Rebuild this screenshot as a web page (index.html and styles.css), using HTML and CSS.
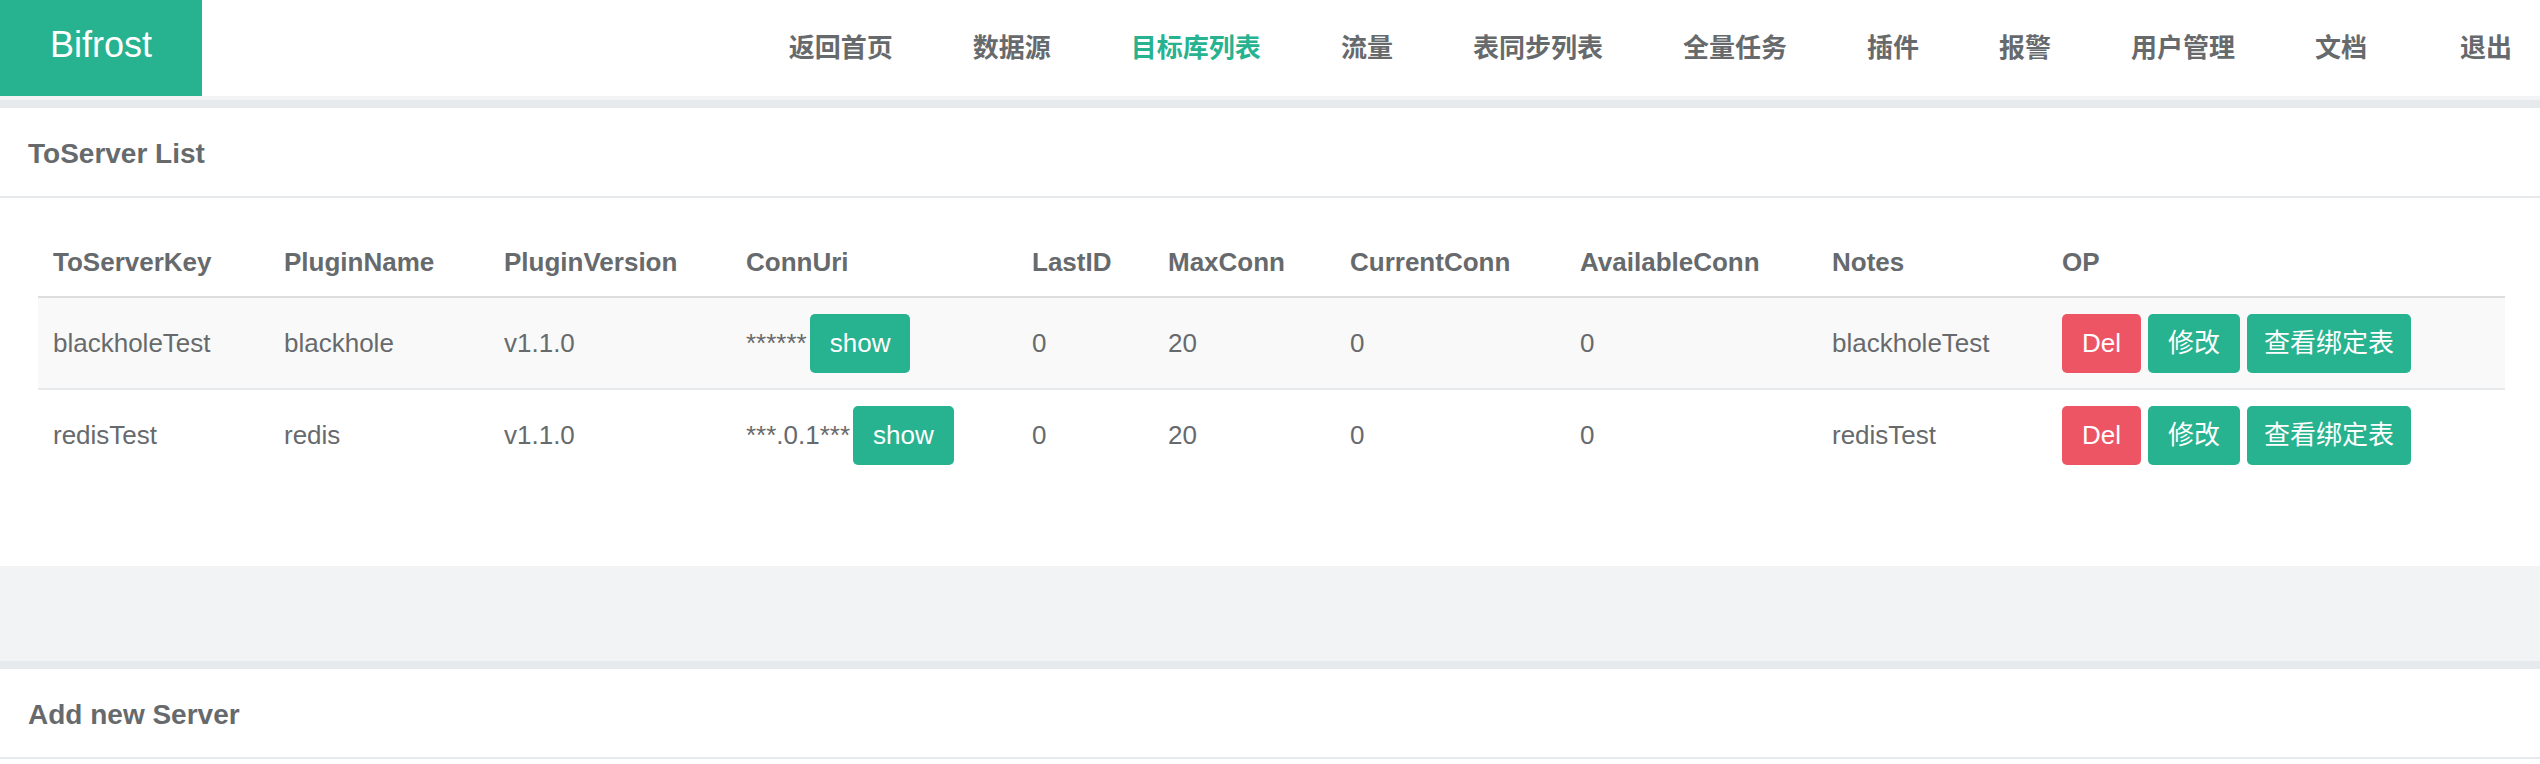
FILE: index.html
```html
<!DOCTYPE html>
<html lang="zh">
<head>
<meta charset="utf-8">
<title>Bifrost - ToServer List</title>
<link rel="stylesheet" href="styles.css">
</head>
<body>
<header class="topnav">
  <a class="brand" href="#">Bifrost</a>
  <ul class="menu">
    <li class="menu-item">返回首页</li>
    <li class="menu-item">数据源</li>
    <li class="menu-item active">目标库列表</li>
    <li class="menu-item">流量</li>
    <li class="menu-item">表同步列表</li>
    <li class="menu-item">全量任务</li>
    <li class="menu-item">插件</li>
    <li class="menu-item">报警</li>
    <li class="menu-item">用户管理</li>
    <li class="menu-item">文档</li>
    <li class="menu-item last">退出</li>
  </ul>
</header>
<main class="content">
  <section class="ibox">
    <div class="ibox-title">ToServer List</div>
    <div class="ibox-body">
      <table class="grid">
        <colgroup>
          <col class="c1"><col class="c2"><col class="c3"><col class="c4"><col class="c5">
          <col class="c6"><col class="c7"><col class="c8"><col class="c9"><col class="c10">
        </colgroup>
        <thead>
          <tr>
            <th>ToServerKey</th><th>PluginName</th><th>PluginVersion</th><th>ConnUri</th><th>LastID</th>
            <th>MaxConn</th><th>CurrentConn</th><th>AvailableConn</th><th>Notes</th><th>OP</th>
          </tr>
        </thead>
        <tbody>
          <tr class="odd">
            <td>blackholeTest</td><td>blackhole</td><td>v1.1.0</td>
            <td><span class="uri">******</span><button class="btn btn-green btn-show">show</button></td>
            <td>0</td><td>20</td><td>0</td><td>0</td><td>blackholeTest</td>
            <td class="ops"><button class="btn btn-red">Del</button><button class="btn btn-green">修改</button><button class="btn btn-green btn-wide">查看绑定表</button></td>
          </tr>
          <tr>
            <td>redisTest</td><td>redis</td><td>v1.1.0</td>
            <td><span class="uri">***.0.1***</span><button class="btn btn-green btn-show">show</button></td>
            <td>0</td><td>20</td><td>0</td><td>0</td><td>redisTest</td>
            <td class="ops"><button class="btn btn-red">Del</button><button class="btn btn-green">修改</button><button class="btn btn-green btn-wide">查看绑定表</button></td>
          </tr>
        </tbody>
      </table>
    </div>
  </section>
  <section class="ibox ibox-second">
    <div class="ibox-title">Add new Server</div>
    <div class="ibox-body ibox-form"></div>
  </section>
</main>
</body>
</html>
```

FILE: styles.css
```css
* { box-sizing: border-box; }

html, body {
  margin: 0;
  padding: 0;
}

body {
  background: #f2f3f5;
  color: #676a6c;
  font-family: "Liberation Sans", "Noto Sans CJK SC", sans-serif;
  font-size: 26px;
  overflow: hidden;
}

.topnav {
  display: flex;
  justify-content: space-between;
  align-items: stretch;
  height: 96px;
  background: #ffffff;
}

.brand {
  display: flex;
  align-items: center;
  justify-content: center;
  width: 202px;
  padding-bottom: 6px;
  background: #27b290;
  color: #ffffff;
  font-size: 36px;
  text-decoration: none;
}

.menu {
  display: flex;
  align-items: center;
  margin: 0;
  padding: 0 0 6px 0;
  list-style: none;
}

.menu-item {
  padding: 0 40px;
  font-family: "Noto Sans CJK SC", "Liberation Sans", sans-serif;
  font-size: 26px;
  font-weight: 700;
  color: #676a6c;
  white-space: nowrap;
}

.menu-item.active {
  color: #27b290;
}

.menu-item.last {
  margin-left: 13px;
  padding-right: 28px;
}

.content {
  padding-top: 4px;
}

.ibox {
  background: #ffffff;
  border-top: 8px solid #e7eaec;
}

.ibox-second {
  margin-top: 95px;
}

.ibox-title {
  display: flex;
  align-items: center;
  height: 90px;
  padding: 4px 28px 0;
  border-bottom: 2px solid #e7eaec;
  font-size: 28px;
  font-weight: 700;
  color: #676a6c;
}

.ibox-body {
  padding: 30px 35px 45px 38px;
}

.ibox-form {
  height: 200px;
}

.grid {
  width: 100%;
  table-layout: fixed;
  border-collapse: collapse;
  margin-bottom: 40px;
}

.c1 { width: 231px; }
.c2 { width: 220px; }
.c3 { width: 242px; }
.c4 { width: 286px; }
.c5 { width: 136px; }
.c6 { width: 182px; }
.c7 { width: 230px; }
.c8 { width: 252px; }
.c9 { width: 230px; }
.c10 { width: 458px; }

.grid th {
  padding: 16px 15px 15px;
  text-align: left;
  font-weight: 700;
  line-height: 37px;
  border-bottom: 2px solid #dddddd;
  white-space: nowrap;
}

.grid td {
  height: 92px;
  padding: 0 15px;
  line-height: 37px;
  vertical-align: middle;
  white-space: nowrap;
}

.grid tbody tr + tr td {
  border-top: 2px solid #e7eaec;
}

.grid tr.odd td {
  background: #f9f9f9;
}

.uri {
  vertical-align: middle;
}

.btn {
  display: inline-block;
  height: 59px;
  padding: 0 20px;
  border: 0;
  border-radius: 5px;
  color: #ffffff;
  font-family: "Liberation Sans", "Noto Sans CJK SC", sans-serif;
  font-size: 26px;
  line-height: 59px;
  vertical-align: middle;
  cursor: pointer;
}

.btn-wide {
  padding: 0 17px;
}

.btn-show {
  margin-left: 3px;
}

.ops .btn {
  margin-right: 7px;
}

.btn-green {
  background: #27b290;
}

.btn-red {
  background: #ed5565;
}
```
